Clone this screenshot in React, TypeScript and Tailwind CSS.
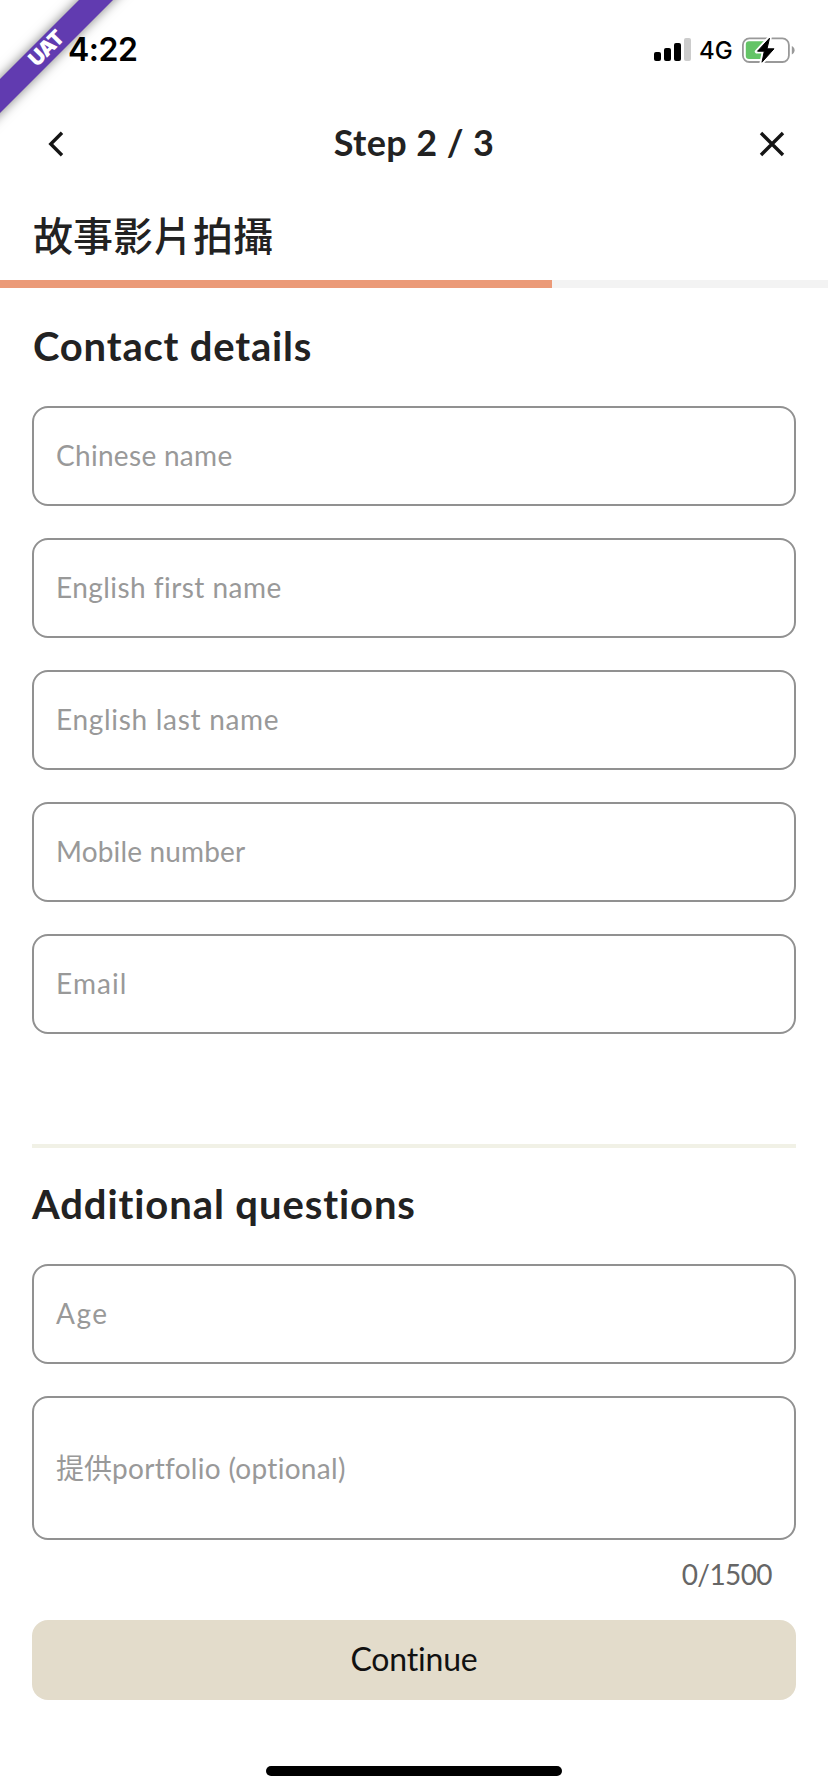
import React from "react";

function Ribbon() {
  return (
    <div className="pointer-events-none absolute left-0 top-0 h-[160px] w-[160px] overflow-hidden">
      <div className="absolute left-[-52px] top-[36px] flex h-6 w-[200px] -rotate-45 items-center justify-center bg-[#613bb0] pb-px pr-[3px] shadow-[0_0_12px_rgba(0,0,0,0.5)]">
        <span className="font-['Inter',sans-serif] text-[20.4px] font-black leading-none tracking-[-0.8px] text-white">UAT</span>
      </div>
    </div>
  );
}

function StatusBar() {
  return (
    <div className="flex h-[100px] items-center justify-between pl-[68px] pr-[33px] font-['Inter',sans-serif] text-black">
      <span className="text-[32px] font-semibold leading-[38px] tracking-[-0.5px]">4:22</span>
      <div className="flex items-center">
        <svg className="h-6 w-[38px]" viewBox="0 0 38 24">
          <rect x="0" y="14" width="7" height="9" rx="2" />
          <rect x="10" y="10" width="7" height="13" rx="2" />
          <rect x="20" y="5" width="7" height="18" rx="2" />
          <rect x="30" y="0" width="7" height="23" rx="2" fill="#cccccc" />
        </svg>
        <span className="ml-[7px] w-[34px] text-[24px] font-medium leading-[29px]">4G</span>
        <svg className="ml-2 h-[28px] w-[54px]" viewBox="0 0 54 28">
          <rect x="1.9" y="2.4" width="46" height="23.6" rx="6.5" fill="none" stroke="#999999" strokeWidth="1.8" />
          <path d="M50.8 10v8.4c1.7-.7 2.8-2.3 2.8-4.2s-1.100-3.500-2.800-4.200z" fill="#999999" />
          <path d="M8 5.200H24V23H8Q4.800 23 4.800 19.800V8.400Q4.800 5.200 8 5.200z" fill="#64c466" />
          <path d="M28.700 1.500L15.800 15.500H22.800L20.500 27L33.500 12.600H26.500Z" fill="#fff" stroke="#fff" strokeWidth="4" strokeLinejoin="round" />
          <path d="M28.500 2.200L16.500 15.200H23.300L21 26.200L33 12.800H26Z" fill="#000" stroke="#000" strokeWidth="1" strokeLinejoin="round" />
        </svg>
      </div>
    </div>
  );
}

function Field({ label, spacing }: { label: string; spacing: string }) {
  return (
    <div className="flex h-[100px] items-center rounded-2xl border-2 border-[#919191] px-[22px] pb-[2px] text-[28px] leading-[38px] text-[#999999]">
      <span className={spacing}>{label}</span>
    </div>
  );
}

export default function App() {
  return (
    <div className="relative flex h-[1792px] w-[828px] flex-col overflow-hidden bg-white font-['Lato','Noto_Sans_CJK_TC',sans-serif] text-[#222222]">
      <StatusBar />
      <header className="flex h-[88px] items-center justify-between pl-12 pr-[42px]">
        <svg className="h-7 w-7" viewBox="0 0 28 28" fill="none" stroke="#151515" strokeWidth="3.400">
          <path d="M14 2.800L2.800 14L14 25.200" />
        </svg>
        <h1 className="mr-[6px] pb-1 text-[36px] font-bold leading-[48px] tracking-[0.4px]">Step 2 / 3</h1>
        <svg className="h-7 w-7" viewBox="0 0 28 28" fill="none" stroke="#151515" strokeWidth="3.400">
          <path d="M3 3L25 25M25 3L3 25" />
        </svg>
      </header>
      <div className="h-[92px] pl-[33px] pr-8 pt-[18px] text-[40px] font-medium leading-[60px]">故事影片拍攝</div>
      <div className="h-2 bg-[#f3f3f3]">
        <div className="h-2 w-[552px] bg-[#eb9a78]" />
      </div>
      <main className="flex flex-col px-8">
        <h2 className="mt-[31px] h-[87px] pl-px text-[40px] font-bold leading-[54px] tracking-[0.8px]">Contact details</h2>
        <div className="flex flex-col gap-8">
          <Field label="Chinese name" spacing="tracking-[0.3px]" />
          <Field label="English first name" spacing="tracking-[0.45px]" />
          <Field label="English last name" spacing="tracking-[0.7px]" />
          <Field label="Mobile number" spacing="tracking-[0.15px]" />
          <Field label="Email" spacing="tracking-[1.1px]" />
        </div>
        <div className="mt-[110px] h-1 bg-[#f1f1e6]" />
        <h2 className="mt-[29px] h-[87px] text-[40px] font-bold leading-[54px] tracking-[0.9px]">Additional questions</h2>
        <Field label="Age" spacing="tracking-[1.5px]" />
        <div className="mt-8 flex h-[144px] items-center rounded-2xl border-2 border-[#919191] px-[22px] text-[28px] leading-[38px] text-[#999999]">
          <span>提供</span>
          <span className="tracking-[0.3px]">portfolio (optional)</span>
        </div>
        <div className="mt-[15px] flex h-[65px] justify-end pr-6 text-[28px] leading-[38px] tracking-[-0.6px] text-[#666666]">
          <span>0/1500</span>
        </div>
        <button className="h-20 rounded-2xl bg-[#e3dccb] pb-[2px] text-[32px] leading-[44px] tracking-[-0.2px] text-[#111111]">Continue</button>
      </main>
      <div className="mx-auto mt-[66px] h-[10px] w-[296px] rounded-full bg-black" />
      <Ribbon />
    </div>
  );
}
